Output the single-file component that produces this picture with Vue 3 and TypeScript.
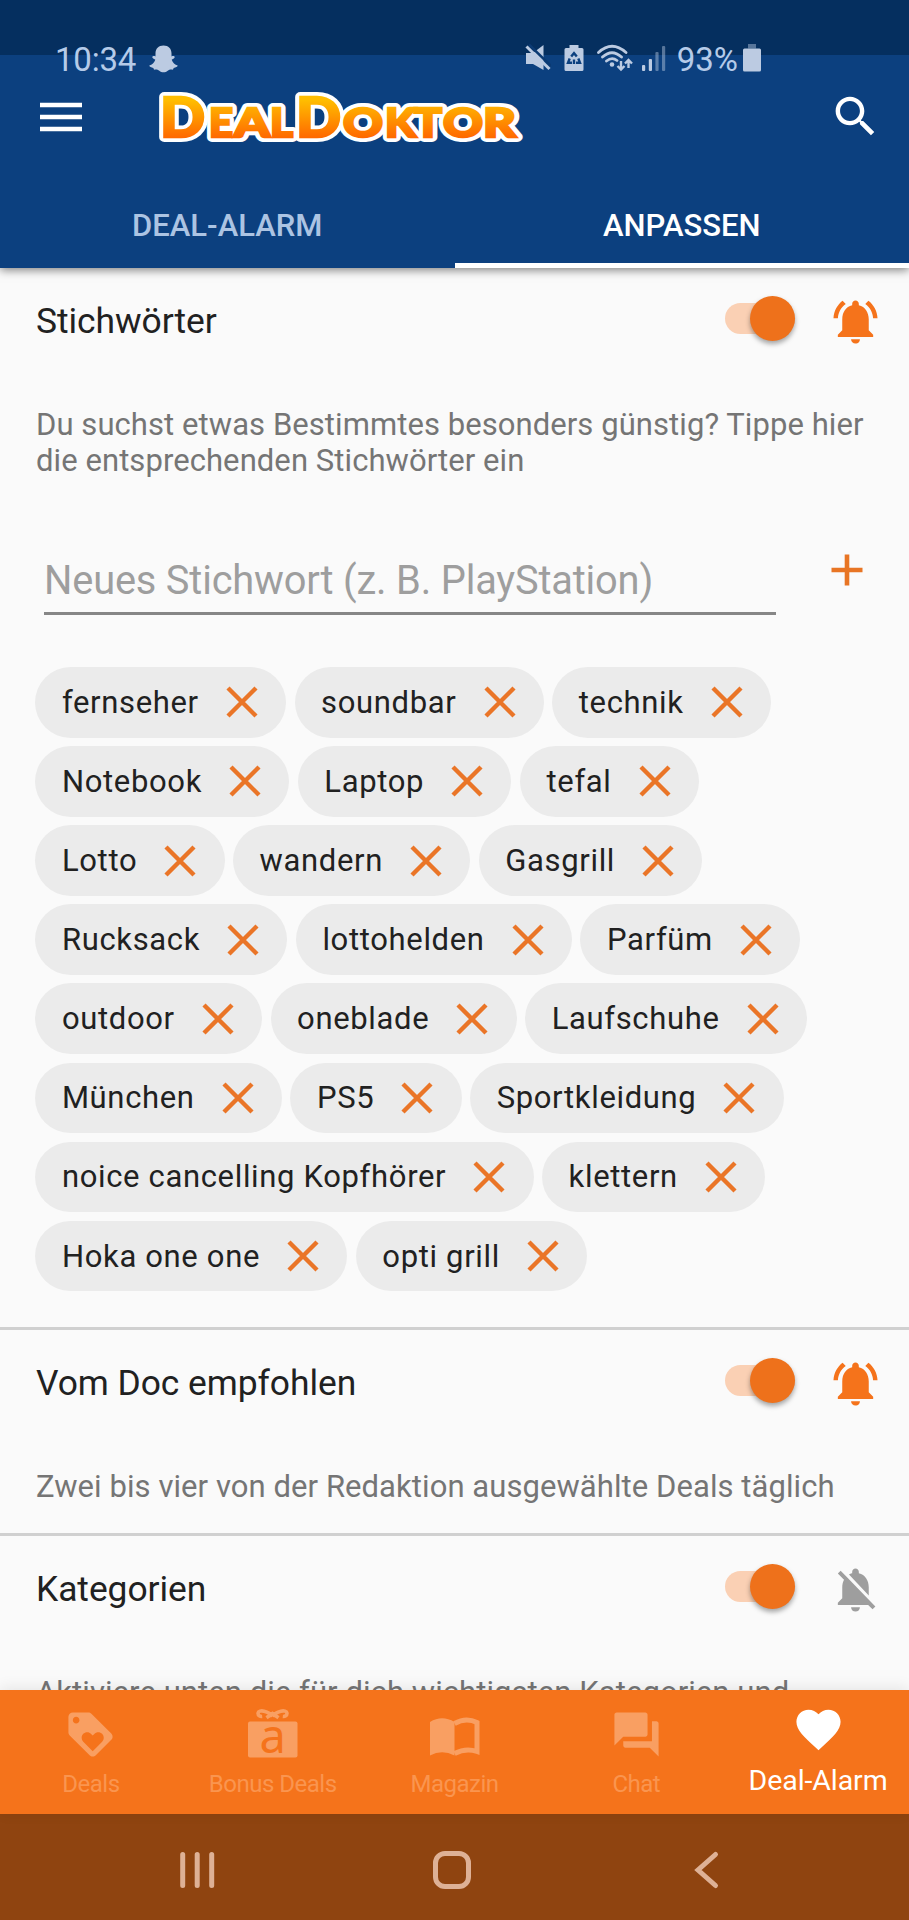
<script setup lang="ts">
interface Letter {
  char: string
  x: number
  width: number
  size: number
}

interface NavItem {
  id: string
  label: string
  active?: boolean
}

const logo: Letter[] = [
  { char: 'D', x: 1, width: 45, size: 55.5 },
  { char: 'E', x: 50, width: 24, size: 40 },
  { char: 'A', x: 75, width: 36, size: 40 },
  { char: 'L', x: 111, width: 23, size: 40 },
  { char: 'D', x: 137, width: 45, size: 55.5 },
  { char: 'O', x: 184, width: 40, size: 40 },
  { char: 'K', x: 226, width: 31, size: 40 },
  { char: 'T', x: 255, width: 28, size: 40 },
  { char: 'O', x: 284, width: 40, size: 40 },
  { char: 'R', x: 324, width: 33, size: 40 },
]

const chipRows: string[][] = [
  ['fernseher', 'soundbar', 'technik'],
  ['Notebook', 'Laptop', 'tefal'],
  ['Lotto', 'wandern', 'Gasgrill'],
  ['Rucksack', 'lottohelden', 'Parfüm'],
  ['outdoor', 'oneblade', 'Laufschuhe'],
  ['München', 'PS5', 'Sportkleidung'],
  ['noice cancelling Kopfhörer', 'klettern'],
  ['Hoka one one', 'opti grill'],
]

const navItems: NavItem[] = [
  { id: 'deals', label: 'Deals' },
  { id: 'bonus', label: 'Bonus Deals' },
  { id: 'magazine', label: 'Magazin' },
  { id: 'chat', label: 'Chat' },
  { id: 'alarm', label: 'Deal-Alarm', active: true },
]

const bellOn =
  'M7.58 4.08L6.15 2.65C3.75 4.48 2.17 7.3 2.03 10.5h2c.15-2.65 1.51-4.97 3.55-6.42zm12.39 6.42h2c-.15-3.2-1.73-6.02-4.12-7.85l-1.42 1.43c2.02 1.45 3.39 3.77 3.54 6.42zM18 11c0-3.07-1.64-5.64-4.5-6.32V4c0-.83-.67-1.5-1.5-1.5s-1.5.67-1.5 1.5v.68C7.63 5.36 6 7.92 6 11v5l-2 2v1h16v-1l-2-2v-5zm-6 11c.14 0 .27-.01.4-.04.65-.14 1.18-.58 1.44-1.18.1-.24.15-.5.15-.78h-4c.01 1.1.9 2 2.01 2z'
const bellOff =
  'M20 18.69L7.84 6.14 5.27 3.49 4 4.76l2.8 2.8v.01c-.52.99-.8 2.16-.8 3.42v5l-2 2v1h13.73l2 2L21 19.72l-1-1.03zM12 22c1.11 0 2-.89 2-2h-4c0 1.11.89 2 2 2zm6-7.32V11c0-3.08-1.64-5.64-4.5-6.32V4c0-.83-.67-1.5-1.5-1.5s-1.5.67-1.5 1.5v.68c-.15.03-.29.08-.42.12-.1.03-.2.07-.3.11h-.01c-.01 0-.01 0-.02.01-.23.09-.46.2-.68.31 0 0-.01 0-.01.01L18 14.68z'
</script>

<template>
  <div class="screen">
    <header class="header">
      <div class="status">
        <span class="time">10:34</span>
        <svg class="ghost" viewBox="0 0 29 28">
          <path d="M14.5 .5c5 0 8 3.3 8 7.8v3.200c1.300-.7 3-.6 3.200.6.100 1.100-1.400 1.900-3 2.600 1 2.900 3.200 4.900 6 5.900-.2 1.500-2 2-4 2.300l-.8 1.800c-2-.3-3.800-.1-5.200 1.100-1.300 1.100-2.600 1.500-4.200 1.500s-2.900-.4-4.200-1.500c-1.400-1.200-3.200-1.400-5.200-1.100l-.8-1.800c-2-.3-3.800-.8-4-2.300 2.800-1 5-3 6-5.900-1.600-.7-3.100-1.500-3-2.600.2-1.200 1.900-1.300 3.200-.6V8.300c0-4.500 3-7.800 8-7.800z" />
        </svg>
        <div class="status-right">
          <svg class="mute" viewBox="0 0 26 28">
            <path d="M1 9h7L18.5 1v25L8 20H1z" />
            <path class="cut" d="M4 .5l22 21.500" />
            <path class="slash" d="M1.500 2.500l23 22.500" />
          </svg>
          <svg class="saver" viewBox="0 0 20 28">
            <path d="M5.500 1h9v3H18q1.500 0 1.500 1.500v20Q19.500 27 18 27H2Q.5 27 .5 25.500v-20Q.5 4 2 4h3.500z" />
            <path class="recycle" d="M7.200 12.500l2.800-3.300 2.800 3.300M5.700 14.500l-1.700 4.300h4M14.300 14.500l1.700 4.300h-4M10 20v-4.500" />
          </svg>
          <svg class="wifi" viewBox="0 0 36 28">
            <path class="line" d="M1.500 8.500Q15 -4 29 8.500M5.500 13Q15 4.500 24.500 13M9.500 17Q15 12.500 20 16.500" />
            <circle cx="15" cy="20.500" r="2.300" />
            <path class="arrows" d="M24 17v8M20.500 22l3.500 3.500 3.500-3.500M31.500 24v-8M28 19.500l3.500-3.500 3.500 3.500" />
          </svg>
          <svg class="signal" viewBox="0 0 24 28">
            <rect x="0" y="21" width="3.200" height="6" rx="1" />
            <rect x="6.800" y="15" width="3.200" height="12" rx="1" />
            <rect class="weak" x="13.400" y="8" width="3.200" height="19" rx="1" />
            <rect class="weak" x="20" y="2" width="3.200" height="25" rx="1" />
          </svg>
          <span class="percent">93%</span>
          <svg class="battery" viewBox="0 0 18 28">
            <rect class="weak" x="5" y="0" width="8" height="4.500" />
            <rect x="0" y="4.500" width="18" height="23" rx="1.500" />
          </svg>
        </div>
      </div>

      <div class="toolbar">
        <svg class="menu" viewBox="0 0 42 30">
          <path d="M0 3h42M0 15h42M0 27h42" />
        </svg>
        <svg class="logo" viewBox="0 0 368 60">
          <defs>
            <linearGradient id="logo-fill" gradientUnits="userSpaceOnUse" x1="0" y1="8" x2="0" y2="50">
              <stop offset="0.1" stop-color="#ffbd00" />
              <stop offset="1" stop-color="#ff6800" />
            </linearGradient>
          </defs>
          <g class="logo-outline">
            <text v-for="(l, i) in logo" :key="i" :x="l.x" y="49" :font-size="l.size" :textLength="l.width" lengthAdjust="spacingAndGlyphs">{{ l.char }}</text>
          </g>
          <g class="logo-face" aria-hidden="true">
            <text v-for="(l, i) in logo" :key="i" :x="l.x" y="49" :font-size="l.size" :textLength="l.width" lengthAdjust="spacingAndGlyphs">{{ l.char }}</text>
          </g>
        </svg>
        <svg class="search" viewBox="0 0 24 24">
          <path d="M15.500 14h-.79l-.28-.27C15.410 12.590 16 11.110 16 9.500 16 5.910 13.090 3 9.500 3S3 5.910 3 9.500 5.910 16 9.500 16c1.610 0 3.090-.59 4.230-1.570l.27.28v.79l5 4.990L20.490 19l-4.990-5zm-6 0C7.010 14 5 11.990 5 9.500S7.010 5 9.500 5 14 7.010 14 9.500 11.990 14 9.500 14z" />
        </svg>
      </div>

      <nav class="tabs">
        <div class="tab">DEAL-ALARM</div>
        <div class="tab selected">ANPASSEN</div>
      </nav>
    </header>

    <main class="content">
      <section class="section">
        <div class="section-head">
          <h2>Stichwörter</h2>
          <span class="switch"><i></i></span>
          <svg class="bell" viewBox="0 0 24 24"><path :d="bellOn" /></svg>
        </div>
        <p class="hint">Du suchst etwas Bestimmtes besonders günstig? Tippe hier<br />die entsprechenden Stichwörter ein</p>
        <div class="entry">
          <div class="field">Neues Stichwort (z. B. PlayStation)</div>
          <svg class="plus" viewBox="0 0 32 32"><path d="M16 .5v31M.5 16h31" /></svg>
        </div>
        <div class="chips">
          <div v-for="(row, r) in chipRows" :key="r" class="chip-row">
            <span v-for="word in row" :key="word" class="chip">
              {{ word }}
              <svg viewBox="0 0 32 32"><path d="M2 2l28 28M30 2L2 30" /></svg>
            </span>
          </div>
        </div>
      </section>

      <section class="section recommended">
        <div class="section-head">
          <h2>Vom Doc empfohlen</h2>
          <span class="switch"><i></i></span>
          <svg class="bell" viewBox="0 0 24 24"><path :d="bellOn" /></svg>
        </div>
        <p class="hint">Zwei bis vier von der Redaktion ausgewählte Deals täglich</p>
      </section>

      <section class="section">
        <div class="section-head">
          <h2>Kategorien</h2>
          <span class="switch"><i></i></span>
          <svg class="bell off" viewBox="0 0 24 24"><path :d="bellOff" /></svg>
        </div>
        <p class="hint">Aktiviere unten die für dich wichtigsten Kategorien und</p>
      </section>
    </main>

    <nav class="bottom-nav">
      <div v-for="item in navItems" :key="item.id" class="nav-item" :class="{ active: item.active }">
        <svg v-if="item.id === 'deals'" viewBox="0 0 24 24">
          <path d="M21.410 11.580l-9-9C12.050 2.220 11.550 2 11 2H4c-1.100 0-2 .9-2 2v7c0 .55.22 1.050.59 1.420l9 9c.36.36.86.58 1.410.58.55 0 1.050-.22 1.410-.59l7-7c.37-.36.59-.86.59-1.410 0-.55-.23-1.060-.59-1.420zM5.500 7C4.670 7 4 6.330 4 5.500S4.670 4 5.500 4 7 4.670 7 5.500 6.330 7 5.500 7zm11.770 8.270L13 19.540l-4.270-4.270C8.280 14.810 8 14.190 8 13.500c0-1.380 1.120-2.500 2.500-2.500.69 0 1.320.28 1.770.74l.73.72.73-.73c.45-.45 1.080-.73 1.770-.73 1.380 0 2.500 1.120 2.500 2.500 0 .69-.28 1.320-.73 1.770z" />
        </svg>
        <svg v-else-if="item.id === 'bonus'" viewBox="0 0 53 53">
          <rect x="2" y="13.500" width="49.500" height="36" rx="2" />
          <path class="bow" d="M26.500 8.500C23 3 12.500 .8 12 5.300c0 2.300 2 3.400 4.200 3.200M26.500 8.500C30 3 40.500 .8 41 5.300c0 2.300-2 3.400-4.200 3.200M20.500 9.800L26.500 5.500l6 4.300" />
          <text class="bonus-letter" x="26.500" y="44.500" text-anchor="middle">a</text>
        </svg>
        <svg v-else-if="item.id === 'magazine'" viewBox="0 0 53 53">
          <path d="M2 14Q14 6.500 26.500 14V47.500Q14 41 2 47.500z" />
          <path class="page" d="M26.500 15.500Q38 9 49 14.500V43.500Q38 39.500 26.500 45.500" />
        </svg>
        <svg v-else-if="item.id === 'chat'" viewBox="0 0 24 24">
          <path d="M21 6h-2v9H6v2c0 .55.45 1 1 1h11l4 4V7c0-.55-.45-1-1-1zm-4 6V3c0-.55-.45-1-1-1H3c-.55 0-1 .45-1 1v14l4-4h10c.55 0 1-.45 1-1z" />
        </svg>
        <svg v-else viewBox="0 0 24 24">
          <path d="M12 21.350l-1.450-1.320C5.400 15.360 2 12.280 2 8.500 2 5.420 4.420 3 7.500 3c1.740 0 3.410.81 4.500 2.090C13.090 3.810 14.760 3 16.500 3 19.580 3 22 5.420 22 8.500c0 3.780-3.400 6.860-8.550 11.540L12 21.350z" />
        </svg>
        <span>{{ item.label }}</span>
      </div>
    </nav>

    <footer class="system-nav">
      <svg viewBox="0 0 40 40"><path d="M5.700 4.500v31M20.200 4.500v31M34.700 4.500v31" /></svg>
      <svg viewBox="0 0 40 40"><rect x="3.500" y="3.500" width="33" height="33" rx="9.500" /></svg>
      <svg viewBox="0 0 40 40"><path d="M28.500 4.500L11 20l17.500 15.500" /></svg>
    </footer>
  </div>
</template>

<style>
body {
  margin: 0;
}
</style>

<style scoped>
.screen {
  width: 909px;
  height: 1920px;
  display: flex;
  flex-direction: column;
  overflow: hidden;
  background: #fafafa;
  font-family: Roboto, 'Liberation Sans', sans-serif;
}
svg {
  display: block;
  flex: none;
}

.header {
  position: relative;
  z-index: 1;
  flex: none;
  height: 268px;
  display: flex;
  flex-direction: column;
  background: linear-gradient(#052f5f 55px, #0c407f 55px);
  box-shadow: 0 2px 9px rgba(0, 0, 0, 0.5);
}
.status {
  height: 80px;
  box-sizing: border-box;
  padding: 38px 148px 0 55px;
  display: flex;
  align-items: flex-start;
  color: #b5cbe9;
  fill: #bccbe2;
  font-size: 33px;
  line-height: 43px;
}
.time {
  letter-spacing: -0.2px;
}
.ghost {
  width: 29px;
  height: 28px;
  margin: 7px 0 0 13px;
}
.status-right {
  margin-left: auto;
  display: flex;
}
.status-right svg {
  height: 28px;
  margin-top: 6px;
}
.mute {
  width: 26px;
}
.mute .cut {
  stroke: #0b3a73;
  stroke-width: 2.5;
}
.mute .slash {
  stroke: #bccbe2;
  stroke-width: 3;
}
.saver {
  width: 20px;
  margin-left: 13px;
}
.recycle {
  fill: none;
  stroke: #0c407f;
  stroke-width: 2.4;
}
.wifi {
  width: 36px;
  margin-left: 13px;
}
.wifi .line {
  fill: none;
  stroke: #bccbe2;
  stroke-width: 2.8;
  stroke-linecap: round;
}
.wifi .arrows {
  fill: none;
  stroke: #bccbe2;
  stroke-width: 2.4;
}
.signal {
  width: 24px;
  margin-left: 9px;
}
.weak {
  opacity: 0.45;
}
.percent {
  margin-left: 11px;
}
.battery {
  width: 18px;
  margin-left: 5px;
}

.toolbar {
  height: 76px;
  display: flex;
  align-items: center;
}
.menu {
  width: 42px;
  height: 30px;
  margin: 0 0 3px 40px;
}
.menu path {
  stroke: #fff;
  stroke-width: 4.6;
}
.logo {
  width: 368px;
  height: 60px;
  margin-left: 77px;
  overflow: visible;
}
.logo text {
  font-family: Lato, sans-serif;
  font-weight: 900;
}
.logo-outline {
  fill: #fff;
  stroke: #fff;
  stroke-width: 10;
  stroke-linejoin: round;
}
.logo-face {
  fill: url(#logo-fill);
  stroke: url(#logo-fill);
  stroke-width: 2.4;
}
.search {
  width: 53px;
  height: 53px;
  margin: 0 27px 3px auto;
  fill: #fff;
}
.tabs {
  flex: 1;
  display: flex;
}
.tab {
  flex: 1;
  box-sizing: border-box;
  padding-top: 49px;
  color: #acc4e3;
  font-size: 31px;
  font-weight: 500;
  line-height: 42px;
  text-align: center;
}
.selected {
  color: #fff;
  border-bottom: 5px solid #fff;
}

.content {
  flex: 1;
  min-height: 0;
  overflow: hidden;
}
.section + .section {
  border-top: 3px solid #d0d0d0;
}
.section-head {
  height: 106px;
  padding: 0 27px 0 36px;
  display: flex;
  align-items: center;
}
h2 {
  flex: 1;
  margin: 0;
  font-size: 35.4px;
  font-weight: 400;
  line-height: 44px;
  letter-spacing: -0.05px;
  color: #212121;
}
.switch {
  width: 70px;
  height: 31px;
  margin-bottom: 5px;
  display: flex;
  align-items: center;
  justify-content: flex-end;
  border-radius: 16px;
  background: #fad0b4;
}
.switch i {
  width: 45px;
  height: 45px;
  border-radius: 50%;
  background: #ee711b;
  box-shadow: 0 3px 5px rgba(0, 0, 0, 0.35);
}
.bell {
  width: 53px;
  height: 53px;
  margin: 0 0 0 34px;
  fill: #f5731b;
}
.bell.off {
  fill: #9e9e9e;
}
.hint {
  margin: 0;
  padding: 33px 0 0 36px;
  font-size: 31px;
  line-height: 36.3px;
  letter-spacing: 0.07px;
  white-space: nowrap;
  color: #757575;
}
.recommended {
  height: 203px;
}
.entry {
  margin: 77px 46px 0 44px;
  display: flex;
  justify-content: space-between;
}
.field {
  width: 732px;
  box-sizing: border-box;
  height: 58px;
  border-bottom: 3px solid #868686;
  color: #9e9e9e;
  font-size: 39.8px;
  letter-spacing: -0.18px;
  line-height: 47px;
}
.plus {
  width: 32px;
  height: 32px;
  margin-top: -3px;
}
.plus path {
  stroke: #e87524;
  stroke-width: 4.6;
}
.chips {
  display: flex;
  flex-direction: column;
  gap: 8.5px;
  margin: 52.5px 0 35.7px 35.4px;
}
.chip-row {
  display: flex;
  gap: 8.5px;
}
.chip {
  height: 70.6px;
  box-sizing: border-box;
  padding: 0 28.300px 0 26.500px;
  display: flex;
  align-items: center;
  border-radius: 36px;
  background: #ebebeb;
  color: #212121;
  font-size: 31px;
  letter-spacing: 0.66px;
  white-space: nowrap;
}
.chip svg {
  width: 32px;
  height: 32px;
  margin-left: 27px;
}
.chip path {
  stroke: #ea7527;
  stroke-width: 4.4;
}

.bottom-nav {
  position: relative;
  flex: none;
  height: 124px;
  display: flex;
  background: #f5731b;
  box-shadow: 0 -2px 14px rgba(0, 0, 0, 0.09);
}
.nav-item {
  flex: 1 1 0;
  min-width: 0;
  padding-top: 18px;
  display: flex;
  flex-direction: column;
  align-items: center;
  fill: #f99f62;
  color: #fa954f;
  font-size: 24px;
  letter-spacing: -0.5px;
  line-height: 30px;
  white-space: nowrap;
}
.nav-item svg {
  width: 53px;
  height: 53px;
}
.nav-item span {
  margin-top: 8px;
}
.nav-item.active {
  padding-top: 13px;
  fill: #fff;
  color: #fff;
  font-size: 28.5px;
  letter-spacing: -0.08px;
}
.nav-item.active span {
  margin-top: 10px;
}
.bow,
.page {
  fill: none;
  stroke: #f99f62;
  stroke-width: 3.6;
}
.page {
  stroke-width: 5;
}
.bonus-letter {
  font-family: 'Noto Sans', sans-serif;
  font-size: 47px;
  fill: #f5731b;
}

.system-nav {
  flex: none;
  height: 106px;
  box-sizing: border-box;
  padding: 36px 182px 0 177px;
  display: flex;
  justify-content: space-between;
  background: #8f4410;
}
.system-nav svg {
  width: 40px;
  height: 40px;
  fill: none;
  stroke: #deb196;
  stroke-width: 5;
  stroke-linecap: round;
}
</style>
